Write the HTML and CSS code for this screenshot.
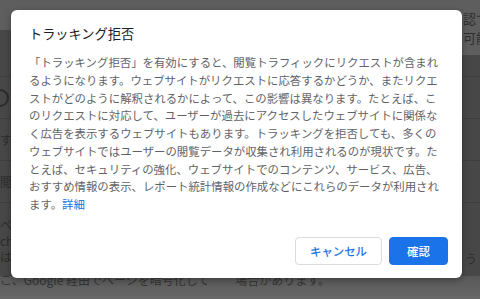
FILE: index.html
```html
<!DOCTYPE html>
<html lang="ja">
<head>
<meta charset="utf-8">
<link rel="stylesheet" href="styles.css">
</head>
<body>
<div class="page">
  <div class="top">
    <span class="top-text">認で<br>可能</span>
  </div>
  <div class="card">
    <div class="row r0"></div>
    <div class="row"><span class="toggle"></span></div>
    <div class="row"><span class="bg-text">すべ</span></div>
    <div class="row"><span class="bg-text">閲覧</span></div>
    <div class="row tall"><span class="bg-text">ペー<br>chr<br>は、</span><span class="bg-text right">う</span></div>
  </div>
  <div class="bottom"><span class="bg-text">こ、Google 経由でページを暗号化して</span><span class="bg-text mid">場合があります。</span></div>
</div>

<div class="dialog">
  <h1 class="title">トラッキング拒否</h1>
  <p class="body">「トラッキング拒否」を有効にすると、閲覧トラフィックにリクエストが含まれ<br>るようになります。ウェブサイトがリクエストに応答するかどうか、またリクエ<br>ストがどのように解釈されるかによって、この影響は異なります。たとえば、こ<br>のリクエストに対応して、ユーザーが過去にアクセスしたウェブサイトに関係な<br>く広告を表示するウェブサイトもあります。トラッキングを拒否しても、多くの<br>ウェブサイトではユーザーの閲覧データが収集され利用されるのが現状です。た<br>とえば、セキュリティの強化、ウェブサイトでのコンテンツ、サービス、広告、<br>おすすめ情報の表示、レポート統計情報の作成などにこれらのデータが利用され<br>ます。<a class="link" href="#">詳細</a></p>
  <div class="actions">
    <button class="btn cancel">キャンセル</button>
    <button class="btn confirm">確認</button>
  </div>
</div>
</body>
</html>
```
FILE: styles.css
```css
* { box-sizing: border-box; }
html, body { margin: 0; padding: 0; }
body {
  width: 480px;
  height: 299px;
  overflow: hidden;
  background: #5f5f5f;
  font-family: "Noto Sans CJK JP", "Noto Sans", sans-serif;
  position: relative;
}
.page {
  display: flex;
  flex-direction: column;
  height: 299px;
  overflow: hidden;
}
.top {
  height: 55px;
  flex: none;
  background: linear-gradient(#474747, #474747) 0 30px / 12px 25px no-repeat, #5e5e5e;
  display: flex;
  justify-content: flex-end;
  padding: 9px 0 0 0;
}
.top-text {
  color: #2e2e2e;
  font-size: 13px;
  line-height: 19px;
  width: 17px;
  overflow: hidden;
  white-space: nowrap;
}
.card {
  flex: 1;
  background: #474747;
  display: flex;
  flex-direction: column;
}
.row {
  height: 42px;
  flex: none;
  border-bottom: 1px solid #3e3e3e;
  display: flex;
  align-items: center;
  justify-content: space-between;
}
.row.r0 { height: 22px; }
.row.tall {
  flex: 1;
  border-bottom: none;
  align-items: flex-start;
  padding-top: 14px;
}
.toggle {
  width: 18px; height: 18px;
  border: 2px solid #2c2c2c;
  border-radius: 50%;
  margin-left: -9px;
}
.bg-text {
  color: #2c2c2c;
  font-size: 12px;
  line-height: 16px;
  white-space: nowrap;
}
.bg-text.right { margin-right: 3px; margin-top: 34px; }
.bottom {
  height: 23px;
  flex: none;
  background: linear-gradient(#585858, #686868);
  display: flex;
  justify-content: space-between;
  padding: 0 150px 0 0;
  overflow: hidden;
}
.bottom .bg-text { margin-top: -4px; color: #333; }

.dialog {
  position: absolute;
  left: 11px;
  top: 10px;
  width: 451px;
  height: 268px;
  background: #fff;
  border-radius: 6px;
  box-shadow: 0 2px 6px rgba(0,0,0,0.3);
  display: flex;
  flex-direction: column;
  padding: 14px 14px 13px 18px;
}
.title {
  margin: 0;
  font-size: 13.2px;
  line-height: 20px;
  font-weight: 400;
  color: #202124;
}
.body {
  margin: 10px 0 0 0;
  font-size: 11.4px;
  line-height: 17.75px;
  color: #5f6368;
  white-space: nowrap;
}
.link { color: #1a73e8; text-decoration: none; }
.actions {
  margin-top: auto;
  display: flex;
  justify-content: flex-end;
  gap: 7px;
}
.btn {
  height: 28px;
  border-radius: 4px;
  font-family: "Noto Sans CJK JP", "Noto Sans", sans-serif;
  font-size: 11.4px;
  font-weight: 500;
  padding: 0;
  cursor: pointer;
}
.cancel {
  width: 87px;
  background: #fff;
  border: 1px solid #dadce0;
  color: #1a73e8;
}
.confirm {
  width: 59px;
  background: #1a73e8;
  border: 1px solid #1a73e8;
  color: #fff;
}
```
